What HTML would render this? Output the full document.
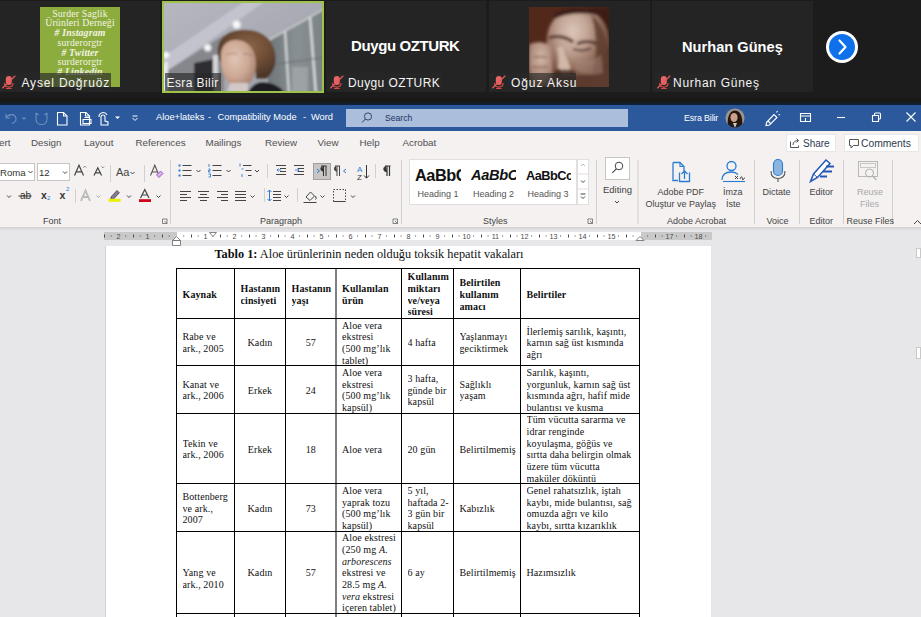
<!DOCTYPE html>
<html><head><meta charset="utf-8">
<style>
*{box-sizing:border-box;margin:0;padding:0}
html,body{width:921px;height:617px;overflow:hidden;background:#e7e7e9;font-family:"Liberation Sans",sans-serif}
.a{position:absolute}
.t{position:absolute;white-space:nowrap}
#zoom{position:absolute;left:0;top:0;width:921px;height:105px;background:#1c1c1c}
.tile{position:absolute;top:1px;height:91px;background:#242424}
.lbl{position:absolute;top:72.8px;height:18.5px;background:rgba(40,40,40,.66);color:#f4f4f4;font-size:12px;line-height:20px;white-space:nowrap}
.mic{position:absolute;top:4px;width:10px;height:12px}
#title{position:absolute;left:0;top:104.5px;width:921px;height:26px;background:#2c599b}
#tabs{position:absolute;left:0;top:130.5px;width:921px;height:25px;background:#f4f1f0}
.tab{position:absolute;top:136.6px;font-size:9.8px;color:#505050;white-space:nowrap}
#ribbon{position:absolute;left:0;top:155px;width:921px;height:73px;background:#f4f1f0}
.glbl{position:absolute;top:216px;font-size:9px;color:#444;white-space:nowrap}
.sep{position:absolute;top:160px;width:1px;height:66px;background:#d2d0ce}
#page{position:absolute;left:106px;top:246px;width:605px;height:371px;background:#fff;box-shadow:-1px 0 0 0 #d2d2d4}
.doc{font-family:"Liberation Serif",serif;color:#111}
.cell{position:absolute;display:flex;align-items:center;font-family:"Liberation Serif",serif;font-size:10px;line-height:11.7px;color:#111;white-space:nowrap;overflow:hidden;letter-spacing:0.1px}
</style></head><body>

<!-- ============ ZOOM STRIP ============ -->
<div id="zoom">
  <div class="a" style="left:0;top:98px;width:921px;height:4px;background:#1a1915"></div>
  <div class="a" style="left:0;top:102px;width:921px;height:3px;background:linear-gradient(#161a20,#0f2240)"></div>
  <!-- tile 1 -->
  <div class="tile" style="left:-2px;width:162px"></div>
  <div class="a" style="left:40px;top:7px;width:80px;height:80px;background:#8dac3e;overflow:hidden">
    <div class="doc" style="position:absolute;left:0;top:1.6px;width:80px;text-align:center;color:#f2f4e4;font-size:9.8px;line-height:9.75px;letter-spacing:0.15px">
      Surder Saglik<br>Ürünleri Derneği<br><b><i># Instagram</i></b><br>surderorgtr<br><b><i># Twitter</i></b><br>surderorgtr<br><b><i># Linkedin</i></b>
    </div>
  </div>
  <div class="lbl" style="left:-1px;width:112px">
    <svg class="a" style="left:0;top:0" width="20" height="20" viewBox="0 0 20 20"><rect x="6.8" y="3" width="6" height="9" rx="3" fill="#e86464"/><path d="M5.5 10 q0 4 4.3 4 q4.3 0 4.3 -4 M9.8 14 v1.5 M7 15.5 h5.6" fill="none" stroke="#d84848" stroke-width="1.2"/><path d="M3.3 15.3 L16.3 2.7" stroke="#e25a5a" stroke-width="1.2"/></svg>
    <span class="t" style="left:22.5px;top:0;letter-spacing:0.82px">Aysel Doğruöz</span>
  </div>

  <!-- tile 2 (video) -->
  <div class="a" style="left:162px;top:1px;width:162px;height:92px;background:#9fc24a"></div>
  <svg class="a" style="left:164px;top:3px" width="158" height="88" viewBox="0 0 158 88">
    <defs>
      <filter id="vb" x="-5%" y="-5%" width="110%" height="110%"><feGaussianBlur stdDeviation="1.1"/></filter>
      <radialGradient id="lt" cx="50%" cy="50%" r="50%"><stop offset="0" stop-color="#fff"/><stop offset=".45" stop-color="#fff" stop-opacity=".9"/><stop offset="1" stop-color="#fff" stop-opacity="0"/></radialGradient>
      <linearGradient id="cl" x1="0" y1="0" x2="1" y2="1"><stop offset="0" stop-color="#b7b8c2"/><stop offset="1" stop-color="#9c9ea6"/></linearGradient>
      <linearGradient id="wn" x1="0" y1="0" x2="1" y2="0"><stop offset="0" stop-color="#6f7679"/><stop offset=".5" stop-color="#899093"/><stop offset="1" stop-color="#7a8184"/></linearGradient>
      <radialGradient id="hr" cx="55%" cy="35%" r="60%"><stop offset="0" stop-color="#8a6448"/><stop offset=".6" stop-color="#6c4b34"/><stop offset="1" stop-color="#4e3828"/></radialGradient>
      <radialGradient id="fc" cx="40%" cy="40%" r="65%"><stop offset="0" stop-color="#e0c4b6"/><stop offset=".6" stop-color="#cda894"/><stop offset="1" stop-color="#a88272"/></radialGradient>
    </defs>
    <g filter="url(#vb)">
    <rect x="-4" y="-4" width="166" height="96" fill="url(#cl)"/>
    <path d="M-4 56 L84 -4 L104 -4 L6 66 L-4 72 Z" fill="#c2c3cc"/>
    <path d="M-4 72 L6 66 L60 32 L60 92 L-4 92 Z" fill="#85878c"/>
    <path d="M-4 62 L4 58 L4 92 L-4 92 Z" fill="#e8e8ec"/>
    <path d="M30 60 L50 56 L50 92 L30 92 Z" fill="#2e2e30"/>
    <rect x="49" y="52" width="5" height="26" fill="#d4d4d8"/>
    <path d="M104 38 L162 4 L162 92 L104 92 Z" fill="url(#wn)"/>
    <path d="M105 37 L162 5" stroke="#c6cacb" stroke-width="1.8"/>
    <path d="M121 28 L125 92" stroke="#cdd1d2" stroke-width="2.4"/>
    <path d="M146 14 L152 92" stroke="#d6dadb" stroke-width="2.4"/>
    <path d="M106 62 L162 54" stroke="#666d71" stroke-width="1.2"/>
    <rect x="128" y="64" width="16" height="26" fill="#a9b0b2" opacity=".6"/>
    <circle cx="72.7" cy="21.7" r="5.5" fill="url(#lt)"/>
    <circle cx="43.7" cy="44.8" r="5" fill="url(#lt)"/>
    <circle cx="2" cy="52" r="4.5" fill="url(#lt)"/>
    <path d="M55 56 C50 40 60 28 76 27 C92 25 106 32 110 46 C114 58 110 70 102 76 L92 76 C92 58 84 44 72 44 C62 44 58 52 58 62 Z" fill="url(#hr)"/>
    <path d="M57 54 C56 44 62 37 72 37 C85 37 92 48 92 60 C92 76 85 84 75 84 C63 84 58 72 57 60 Z" fill="url(#fc)"/>
    <path d="M62 52 C66 50 70 50 73 51 M79 51 C83 50 86 51 88 53" stroke="#8a6a5e" stroke-width="1.1" fill="none" opacity=".6"/>
    <path d="M66 80 L84 80 L84 92 L62 92 Z" fill="#d2c8c6"/>
    <path d="M82 92 C86 84 92 79 98 79 C108 79 118 84 122 92 Z" fill="#1e1e22"/>
    </g>
  </svg>
  <div class="lbl" style="left:164.5px;width:56.5px">
    <span class="t" style="left:2px;top:0;letter-spacing:0.42px">Esra Bilir</span>
  </div>

  <!-- tile 3 -->
  <div class="tile" style="left:326px;width:160px"></div>
  <div class="t" style="left:351px;top:37.3px;font-size:15px;font-weight:bold;color:#fff;letter-spacing:-0.4px">Duygu OZTURK</div>
  <div class="lbl" style="left:327px;width:114.5px">
    <svg class="a" style="left:0;top:0" width="20" height="20" viewBox="0 0 20 20"><rect x="6.8" y="3" width="6" height="9" rx="3" fill="#e86464"/><path d="M5.5 10 q0 4 4.3 4 q4.3 0 4.3 -4 M9.8 14 v1.5 M7 15.5 h5.6" fill="none" stroke="#d84848" stroke-width="1.2"/><path d="M3.3 15.3 L16.3 2.7" stroke="#e25a5a" stroke-width="1.2"/></svg>
    <span class="t" style="left:21px;top:0;letter-spacing:0.4px">Duygu OZTURK</span>
  </div>

  <!-- tile 4 -->
  <div class="tile" style="left:489px;width:161px"></div>
  <svg class="a" style="left:529px;top:7px" width="80" height="80" viewBox="0 0 80 80">
    <defs>
      <filter id="bl" x="-10%" y="-10%" width="120%" height="120%"><feGaussianBlur stdDeviation="1.6"/></filter>
      <radialGradient id="hd" cx="42%" cy="28%" r="72%"><stop offset="0" stop-color="#dcc6b8"/><stop offset=".35" stop-color="#c0a292"/><stop offset=".7" stop-color="#86604e"/><stop offset="1" stop-color="#52301f"/></radialGradient>
      <radialGradient id="hn" cx="50%" cy="35%" r="70%"><stop offset="0" stop-color="#d4b8a8"/><stop offset=".7" stop-color="#a88676"/><stop offset="1" stop-color="#6e4a3a"/></radialGradient>
    </defs>
    <rect width="80" height="80" fill="#52281b"/>
    <g filter="url(#bl)">
      <rect x="60" y="0" width="22" height="80" fill="#3e1d13"/>
      <path d="M18 40 C16 18 28 2 48 2 C68 2 80 16 80 36 L80 82 L26 82 C22 70 19 55 18 40 Z" fill="url(#hd)"/>
      <path d="M24 8 C34 0 60 -2 74 10 C66 6 40 4 26 12 Z" fill="#3a1f16"/>
      <path d="M20 31 C28 28 38 30 44 35 M48 37 C54 34 62 34 68 37" stroke="#4a2a20" stroke-width="3" fill="none"/>
      <path d="M44 42 C50 44 56 44 62 41" stroke="#55352a" stroke-width="2.2" fill="none"/>
      <path d="M28 40 C30 50 30 58 28 63 C32 66 38 66 42 63 C40 56 36 48 34 40 Z" fill="#d2b8a8"/>
      <path d="M28 62 C31 65 38 66 42 63" stroke="#5a3628" stroke-width="2.5" fill="none"/>
      <path d="M24 66 C34 70 60 70 80 62 L80 82 L28 82 Z" fill="#5a3a2e"/><path d="M26 66 C32 64 40 64 46 66" stroke="#3e2218" stroke-width="3" fill="none"/>
      <path d="M0 38 C4 34 18 34 22 40 L24 80 L0 80 Z" fill="url(#hn)"/>
      <path d="M62 8 C76 18 82 40 82 82 L58 82 C68 60 70 30 62 8 Z" fill="#5e3c2e" opacity=".85"/>
      <path d="M46 50 C54 56 64 54 72 48 L74 66 C60 70 50 66 46 62 Z" fill="#a8887a" opacity=".5"/>
      <path d="M4 50 h14 M3 60 h16" stroke="#8a6656" stroke-width="1.5"/>
    </g>
  </svg>
  <div class="lbl" style="left:489.3px;width:87px">
    <svg class="a" style="left:0;top:0" width="20" height="20" viewBox="0 0 20 20"><rect x="6.8" y="3" width="6" height="9" rx="3" fill="#e86464"/><path d="M5.5 10 q0 4 4.3 4 q4.3 0 4.3 -4 M9.8 14 v1.5 M7 15.5 h5.6" fill="none" stroke="#d84848" stroke-width="1.2"/><path d="M3.3 15.3 L16.3 2.7" stroke="#e25a5a" stroke-width="1.2"/></svg>
    <span class="t" style="left:21.6px;top:0;letter-spacing:0.95px">Oğuz Aksu</span>
  </div>

  <!-- tile 5 -->
  <div class="tile" style="left:652px;width:161px"></div>
  <div class="t" style="left:682px;top:39px;font-size:14.6px;font-weight:bold;color:#fff;letter-spacing:0.02px">Nurhan Güneş</div>
  <div class="lbl" style="left:653.5px;width:107.5px">
    <svg class="a" style="left:0;top:0" width="20" height="20" viewBox="0 0 20 20"><rect x="6.8" y="3" width="6" height="9" rx="3" fill="#e86464"/><path d="M5.5 10 q0 4 4.3 4 q4.3 0 4.3 -4 M9.8 14 v1.5 M7 15.5 h5.6" fill="none" stroke="#d84848" stroke-width="1.2"/><path d="M3.3 15.3 L16.3 2.7" stroke="#e25a5a" stroke-width="1.2"/></svg>
    <span class="t" style="left:19.5px;top:0;letter-spacing:0.72px">Nurhan Güneş</span>
  </div>

  <!-- next arrow -->
  <div class="a" style="left:826px;top:31px;width:32px;height:32px;border-radius:50%;background:#fff"></div>
  <div class="a" style="left:829px;top:34px;width:26px;height:26px;border-radius:50%;background:#0e71eb"></div>
  <svg class="a" style="left:826px;top:31px" width="32" height="32" viewBox="0 0 32 32"><path d="M13.5 9.5 L19.5 16 L13.5 22.5" stroke="#fff" stroke-width="2.2" fill="none" stroke-linecap="round" stroke-linejoin="round"/></svg>
</div>

<!-- ============ WORD TITLE BAR ============ -->
<div id="title"></div>
<!-- QAT icons -->
<svg class="a" style="left:0;top:105px" width="150" height="25" viewBox="0 0 150 25">
  <g fill="none" stroke="#6f8fc2" stroke-width="1.1">
    <path d="M6 9 L6 13 L10 13"/><path d="M6.5 12.5 C9 8.5 15 8.5 16 13.5 C16.5 16 14 18 12 18.5"/>
    <path d="M22.5 12.5 l1.5 1.5 l1.5 -1.5" />
    <path d="M36 8 v6 c0 3.5 2.5 5.5 5.5 5.5 s5.5 -2 5.5 -5.5 v-6"/><path d="M36 8 l2.5 2 M47 8 l-2.5 2"/>
  </g>
  <g fill="none" stroke="#fff" stroke-width="1.1">
    <path d="M57.5 7.5 h6 l3.5 3.5 v9 h-9.5 z"/><path d="M63.5 7.5 v3.5 h3.5"/>
    <path d="M80.5 7.5 h5.5 l3.5 3.5 v9 h-9 z"/><path d="M85.5 7.5 v3.5 h3.5"/><path d="M83 14.5 h8 v4 h-8 z M84.5 12.5 h5 v2"/>
    <path d="M101 20 v-8 a2 2 0 0 1 4 0 v4 l3 1 v3 z"/><path d="M99 12 a4.2 4.2 0 0 1 8 -2"/>
  </g>
  <path d="M115 11.5 l2.5 2.5 l2.5 -2.5 z" fill="#fff"/>
  <path d="M132.5 11 h5 M132.5 13 l2.5 2.5 l2.5 -2.5" stroke="#fff" stroke-width="1" fill="none"/>
</svg>
<div class="t" style="left:156px;top:112px;font-size:9.3px;color:#fff">Aloe+lateks</div>
<div class="t" style="left:208px;top:112px;font-size:9.3px;color:#fff">-</div>
<div class="t" style="left:217.5px;top:112px;font-size:9.3px;color:#fff">Compatibility Mode</div>
<div class="t" style="left:303px;top:112px;font-size:9.3px;color:#fff">-</div>
<div class="t" style="left:311px;top:112px;font-size:9.3px;color:#fff">Word</div>
<div class="a" style="left:346px;top:109px;width:282px;height:18px;background:#abbfdc"></div>
<svg class="a" style="left:360px;top:111px" width="14" height="13" viewBox="0 0 14 13"><circle cx="8" cy="5.5" r="3.6" fill="none" stroke="#2a3a5a" stroke-width=".9"/><path d="M5.4 8.1 L2 11.5" stroke="#2a3a5a" stroke-width="1"/></svg>
<div class="t" style="left:385px;top:112.5px;font-size:8.6px;color:#1e3260">Search</div>
<div class="t" style="left:684px;top:112.5px;font-size:8.8px;color:#fff;letter-spacing:-0.1px">Esra Bilir</div>
<svg class="a" style="left:725px;top:108px" width="20" height="20" viewBox="0 0 20 20"><defs><clipPath id="av"><circle cx="10" cy="10" r="9.6"/></clipPath></defs><g clip-path="url(#av)"><rect width="20" height="20" fill="#9d948f"/><path d="M3 20 C2 12 3 3 10 2.5 C17 3 18 12 17 20 Z" fill="#24160f"/><ellipse cx="9" cy="9.5" rx="3.6" ry="4.6" fill="#caa08a"/><path d="M4 20 C5 15 8 14.5 10 15 C13 14.5 15 16 16 20 Z" fill="#1c1c22"/><path d="M8 15 L10 20 L12 15 Z" fill="#d8c8c0"/></g></svg>
<svg class="a" style="left:760px;top:107px" width="160" height="20" viewBox="0 0 160 20">
  <g fill="none" stroke="#fff" stroke-width="1.1">
    <path d="M6.5 15.5 L14 7.5 L17 10.5 L9.5 18 L6 18.5 z M8 14 l3 3"/><path d="M16.5 5.5 l1 -1.5 M18.5 8 l1.5 -0.5"/>
    <path d="M40.5 6.5 h10 v8 h-10 z M40.5 9 h10 M45.5 11 v3.5"/>
    <path d="M77 10.5 h8"/>
    <path d="M112.5 8.5 h6 v6 h-6 z M114.5 8.5 v-1.5 q0 -1 1 -1 h4 q1 0 1 1 v4 q0 1 -1 1 h-1"/>
    <path d="M146.5 5.5 L155.5 14.5 M155.5 5.5 L146.5 14.5" stroke-width="1.1"/>
  </g>
</svg>

<!-- ============ TABS ============ -->
<div id="tabs"></div>
<div class="tab" style="left:-1px">ert</div>
<div class="tab" style="left:31px">Design</div>
<div class="tab" style="left:84px">Layout</div>
<div class="tab" style="left:135.5px">References</div>
<div class="tab" style="left:205.5px">Mailings</div>
<div class="tab" style="left:265px">Review</div>
<div class="tab" style="left:317.5px">View</div>
<div class="tab" style="left:359.5px">Help</div>
<div class="tab" style="left:402.5px">Acrobat</div>
<div class="a" style="left:786px;top:134px;width:50px;height:18px;background:#fff;border:1px solid #e9e7e5"></div>
<svg class="a" style="left:789px;top:137px" width="12" height="12" viewBox="0 0 12 12"><path d="M1.5 4.5 v6 h8 v-2" fill="none" stroke="#555" stroke-width="1"/><path d="M4 8 c0 -3 2 -4.5 5.5 -4.5 M7.5 1.5 l2 2 l-2 2" fill="none" stroke="#555" stroke-width="1"/></svg>
<div class="t" style="left:803px;top:137.6px;font-size:10px;color:#2e3a4e">Share</div>
<div class="a" style="left:844px;top:134px;width:75px;height:18px;background:#fff;border:1px solid #e9e7e5"></div>
<svg class="a" style="left:848px;top:138px" width="12" height="12" viewBox="0 0 12 12"><path d="M1.5 1.5 h9 v6 h-5 l-2.5 2.5 v-2.5 h-1.5 z" fill="none" stroke="#555" stroke-width="1"/></svg>
<div class="t" style="left:861px;top:137.6px;font-size:10.3px;color:#2e3a4e">Comments</div>

<!-- ============ RIBBON ============ -->
<div id="ribbon"></div>
<svg class="a" style="left:0;top:155px" width="921" height="73" viewBox="0 155 921 73">
 <g fill="none" stroke-width="1">
  <!-- Font boxes -->
  <rect x="-2" y="163.5" width="36.5" height="17" fill="#fff" stroke="#c8c6c4"/>
  <rect x="37.5" y="163.5" width="32" height="17" fill="#fff" stroke="#c8c6c4"/>
  <path d="M28.5 171 l2 2 l2 -2 M63 171.5 l2 2 l2 -2" stroke="#444"/>
  <!-- grow/shrink -->
  <path d="M74.5 175.5 L79 165.2 L83.5 175.5 M76.2 171.8 h5.6" stroke="#444" stroke-width="1.2"/><path d="M83.5 167.5 l1.3 -1.3 l1.3 1.3" stroke="#555" stroke-width=".8"/>
  <path d="M94 175.5 L97.8 167.8 L101.6 175.5 M95.4 172.8 h4.8" stroke="#444" stroke-width="1.2"/><path d="M101.5 166.5 l1.3 1.3 l1.3 -1.3" stroke="#555" stroke-width=".8"/>
  <path d="M110.5 165 v17" stroke="#d2d0ce"/>
  <path d="M130.5 172 l2 2 l2 -2" stroke="#444"/>
  <path d="M144.5 165 v17" stroke="#d2d0ce"/>
  <path d="M150.5 175.5 L154.8 165.2 L159 175.5 M152 172 h5.5" stroke="#555" stroke-width="1.1"/><path d="M156.5 175 l4 -4 l2.5 2.5 l-4 4 z" stroke="#a060c8" fill="#d8b0e8"/>
  <!-- row2 -->
  <path d="M7 195.5 l2 2 l2 -2" stroke="#444"/>
  <path d="M18.5 196 h13" stroke="#333"/>
  <path d="M96.5 195.5 l2 2 l2 -2" stroke="#aaa"/>
  <path d="M75.5 189 v14" stroke="#d2d0ce"/>
  <path d="M81 200.8 L85.5 190.5 L90 200.8 M82.8 197 h5.4" stroke="#a8a8a8" stroke-width="1.7"/><path d="M81 200.8 L85.5 190.5 L90 200.8" stroke="#e8e8e8" stroke-width=".5"/>
  <path d="M111 197 l6 -6.5 l2.3 2.3 l-6 6.5 h-2.3 z" stroke="#555" fill="#8a7a9a"/><rect x="108.5" y="198.8" width="12" height="3" fill="#e8f000" stroke="none"/>
  <path d="M127 195.5 l2 2 l2 -2" stroke="#444"/>
  <path d="M140.5 198 L144.8 189.5 L149 198 M142 195 h5.6" stroke="#444" stroke-width="1.2"/><rect x="139" y="199.2" width="12" height="2.8" fill="#d0021b" stroke="none"/>
  <path d="M156.5 195.5 l2 2 l2 -2" stroke="#444"/>
  <path d="M162.5 219 h4.5 v4.5 M162.5 219 v4.5 h4.5 M164.5 221 l2.5 2.5" stroke="#666" stroke-width=".8"/>
  <path d="M170.5 160 v64" stroke="#d2d0ce"/>

  <!-- Paragraph row 1 -->
  <g stroke="#444">
   <path d="M182.5 165.5 h9 M182.5 170.5 h9 M182.5 175.5 h9"/>
   <path d="M212.5 165.5 h9 M212.5 170.5 h9 M212.5 175.5 h9"/>
   <path d="M243 165.5 h8.5 M245.5 170.5 h6 M248 175.5 h3.5"/>
   <path d="M196.5 170 l2 2 l2 -2 M226.5 170 l2 2 l2 -2 M255 170 l2 2 l2 -2"/>
   <path d="M276 165.5 h10 M280 168.5 h6 M280 171.5 h6 M276 174.5 h10"/>
   <path d="M294 165.5 h10 M298 168.5 h6 M298 171.5 h6 M294 174.5 h10"/>
  </g>
  <g fill="#2b7cd3" stroke="none">
   <rect x="178.5" y="164.5" width="2" height="2"/><rect x="178.5" y="169.5" width="2" height="2"/><rect x="178.5" y="174.5" width="2" height="2"/>
  </g>
  <g stroke="#2b7cd3" stroke-width=".9">
   <path d="M209 164 v3 M208.5 169 h1.5 v1.5 h-1.5 v1.5 h2 M208.5 174 h2 v3 h-2"/>
   <path d="M240 163.5 v3 M241.5 169 h2 M242 174 v3"/>
   <path d="M281 170 h-4 l1.5 -1.5 M277 170 l1.5 1.5"/>
   <path d="M295 170 h4 l-1.5 -1.5 M299 170 l-1.5 1.5"/>
  </g>
  <path d="M267.5 164 v14" stroke="#d2d0ce"/>
  <rect x="313.5" y="163.5" width="17" height="16" fill="#c8c6c4" stroke="#a19f9d"/>
  <path d="M317 169 l2.5 2 l-2.5 2" stroke="#2b7cd3"/><path d="M323.5 166 v10 M326 166 v10 M321 166 h5.5" stroke="#333"/><path d="M322.5 166.5 a2 2.3 0 0 0 0 4.5 h1" fill="#333" stroke="#333"/>
  <path d="M337 166 v10 M339.5 166 v10 M335 166 h5" stroke="#444"/><path d="M336 166.5 a2 2.3 0 0 0 0 4.5 h1" fill="#444" stroke="#444"/><path d="M346 169 l-2.5 2 l2.5 2" stroke="#2b7cd3"/>
  <text x="357" y="172" font-family="Liberation Sans" font-size="8" fill="#2b7cd3" stroke="none">A</text>
  <text x="357" y="179.5" font-family="Liberation Sans" font-size="8" fill="#333" stroke="none">Z</text>
  <path d="M366.5 165 v13 M364 175.5 l2.5 2.7 l2.5 -2.7" stroke="#333"/>
  <path d="M375.5 164 v14" stroke="#d2d0ce"/>
  <path d="M387 166 v10 M389.5 166 v10 M385 166 h5.5" stroke="#333" stroke-width="1.2"/><path d="M386 166.5 a2.2 2.5 0 0 0 0 5 h1" fill="#333" stroke="#333"/>
  <!-- Paragraph row 2 -->
  <g stroke="#444">
   <path d="M180 191.5 h11 M180 194.5 h7 M180 197.5 h11 M180 200.5 h7"/>
   <path d="M198 191.5 h11 M200 194.5 h7 M198 197.5 h11 M200 200.5 h7"/>
   <path d="M217 191.5 h11 M221 194.5 h7 M217 197.5 h11 M221 200.5 h7"/>
   <path d="M235 191.5 h11 M235 194.5 h11 M235 197.5 h11 M235 200.5 h11"/>
   <path d="M250.5 195.5 l2 2 l2 -2"/>
   <path d="M273 191.5 h8 M273 194.5 h8 M273 197.5 h8 M273 200.5 h8"/>
   <path d="M284.5 195.5 l2 2 l2 -2"/>
   <path d="M320.5 195.5 l2 2 l2 -2"/>
   <path d="M351 195.5 l2 2 l2 -2"/>
  </g>
  <path d="M269.5 190 v11 M267.5 192 l2 -2 l2 2 M267.5 199 l2 2 l2 -2" stroke="#2b7cd3"/>
  <path d="M264.5 188 v14 M297.5 188 v14" stroke="#d2d0ce"/>
  <path d="M306 197 l4.5 -5 l4 4 l-4.5 4.5 z" stroke="#444"/><path d="M303.5 202.5 h13" stroke="#444"/><path d="M315.5 196 q1.5 2.5 0 3.5" stroke="#444"/>
  <rect x="333.5" y="189.5" width="12" height="12" stroke="#444" stroke-dasharray="1.5 1.5"/><path d="M333.5 201.5 h12" stroke="#444"/>
  <path d="M393 219 h4.5 v4.5 M393 219 v4.5 h4.5 M395 221 l2.5 2.5" stroke="#666" stroke-width=".8"/>
  <path d="M401.5 160 v64" stroke="#d2d0ce"/>

  <!-- Styles gallery -->
  <rect x="409.5" y="159.5" width="167" height="45" fill="#fff" stroke="#e1dfdd"/>
  <rect x="577.5" y="159.5" width="11" height="45" fill="#fff" stroke="#e1dfdd"/>
  <path d="M577.5 174 h11 M577.5 189 h11" stroke="#e1dfdd"/>
  <path d="M581 166 l2 -2 l2 2" stroke="#bbb"/>
  <path d="M581 180.5 l2 2 l2 -2" stroke="#444"/>
  <path d="M580.5 194 h5 M581 196.5 l2 2 l2 -2" stroke="#444"/>
  <path d="M588 219 h4.5 v4.5 M588 219 v4.5 h4.5 M590 221 l2.5 2.5" stroke="#666" stroke-width=".8"/>
  <path d="M596.5 160 v64" stroke="#d2d0ce"/>
  <!-- Editing -->
  <rect x="605.5" y="157.5" width="24" height="22" fill="#fff" stroke="#c8c6c4"/>
  <circle cx="619" cy="166" r="3.8" stroke="#444"/><path d="M616.3 168.8 l-4 4" stroke="#444" stroke-width="1.1"/>
  <path d="M615 201 l2 2 l2 -2" stroke="#444"/>
  <path d="M638 160 v64" stroke="#d2d0ce"/>
  <!-- Adobe PDF -->
  <path d="M673 162.5 h7 l4 4 v5 M673 162.5 v18 h5" stroke="#2b7cd3" stroke-width="1.3"/>
  <path d="M680 162.5 v4 h4" stroke="#2b7cd3" stroke-width="1.1"/>
  <path d="M679.5 172.5 v9 h10 v-9" stroke="#2b7cd3" stroke-width="1.3"/>
  <path d="M684.5 179 v-8 M681.5 174 l3 -3 l3 3" stroke="#2b7cd3" stroke-width="1.3"/>
  <!-- Imza -->
  <circle cx="731.5" cy="166" r="4.5" stroke="#2b7cd3" stroke-width="1.3"/>
  <path d="M722 180 c0 -5 3 -8 9.5 -8 c3 0 5 1 6.5 2.5" stroke="#2b7cd3" stroke-width="1.3"/>
  <path d="M723 181.5 h22" stroke="#2b7cd3" stroke-width="1.1"/>
  <path d="M735 176 l3 3 M738 176 l-3 3" stroke="#333" stroke-width=".9"/>
  <path d="M740 179 c1 -3 2 -3 2.5 0 s1.5 -2 2.5 -1" stroke="#333" stroke-width=".9"/>
  <path d="M754.5 160 v64" stroke="#d2d0ce"/>
  <!-- Dictate mic -->
  <rect x="773.5" y="159.5" width="9" height="16" rx="4.5" fill="#8cb4e0" stroke="#2b7cd3" stroke-width="1.1"/>
  <path d="M771 171 c0 6 3 7.5 7 7.5 s7 -1.5 7 -7.5 M778 178.5 v3.5" stroke="#555" stroke-width="1.1"/>
  <path d="M799.5 160 v64" stroke="#d2d0ce"/>
  <!-- Editor -->
  <path d="M810.5 181.5 l3 -7.5 l12.5 -14 l4 3.5 l-12.5 14 z" fill="#fff" stroke="#2457b8" stroke-width="1.5"/>
  <path d="M813.5 174 l4 3.5" stroke="#2457b8" stroke-width="1"/>
  <path d="M826 166.5 h8 M823 171.5 h9 M820 176.5 h7" stroke="#2457b8" stroke-width="2"/>
  <path d="M843.5 160 v64" stroke="#d2d0ce"/>
  <!-- Reuse files -->
  <rect x="858.5" y="161.5" width="19" height="15" stroke="#b8b8b8"/>
  <rect x="860.5" y="163.5" width="15" height="4" stroke="#c8c8c8"/>
  <circle cx="869.5" cy="173" r="4" stroke="#b0b0b0"/><path d="M872.5 176 l4 4" stroke="#b0b0b0" stroke-width="1.2"/>
  <path d="M892.5 160 v64" stroke="#d2d0ce"/>
  <path d="M914 224 l3.5 -3.5 l3.5 3.5" stroke="#444"/>
 </g>
</svg>
<div class="t" style="left:0;top:167px;font-size:9.6px;color:#333">Roma</div>
<div class="t" style="left:39px;top:167px;font-size:9.6px;color:#333">12</div>
<div class="t" style="left:116px;top:166px;font-size:11px;color:#444">Aa</div>
<div class="t" style="left:20px;top:189.5px;font-size:10px;color:#333">ab</div>
<div class="t" style="left:41px;top:189px;font-size:10.5px;font-weight:bold;color:#333">x</div>
<div class="t" style="left:47px;top:195px;font-size:6px;color:#2b7cd3">2</div>
<div class="t" style="left:59.5px;top:189px;font-size:10.5px;font-weight:bold;color:#333">x</div>
<div class="t" style="left:66px;top:186px;font-size:6px;color:#2b7cd3">2</div>
<div class="glbl" style="left:43px">Font</div>
<div class="glbl" style="left:260px">Paragraph</div>
<div class="t" style="left:415px;top:165.5px;font-size:16.3px;font-weight:bold;color:#111;letter-spacing:-0.45px;width:45.5px;overflow:hidden">AaBbC</div>
<div class="t" style="left:471px;top:167px;font-size:14.6px;font-weight:bold;font-style:italic;color:#111;letter-spacing:-0.35px;width:45px;overflow:hidden">AaBbC</div>
<div class="t" style="left:526px;top:168px;font-size:12.8px;font-weight:bold;color:#111;letter-spacing:-0.55px;width:45px;overflow:hidden">AaBbCc</div>
<div class="t" style="left:417.5px;top:189px;font-size:9px;color:#555">Heading 1</div>
<div class="t" style="left:473px;top:189px;font-size:9px;color:#555">Heading 2</div>
<div class="t" style="left:527.5px;top:189px;font-size:9px;color:#555">Heading 3</div>
<div class="glbl" style="left:483px">Styles</div>
<div class="t" style="left:603px;top:184px;font-size:9.5px;color:#444">Editing</div>
<div class="t" style="left:657.5px;top:186.5px;font-size:9px;color:#444">Adobe PDF</div>
<div class="t" style="left:645.5px;top:199px;font-size:9px;color:#444">Oluştur ve Paylaş</div>
<div class="t" style="left:723px;top:186.5px;font-size:9px;color:#444">İmza</div>
<div class="t" style="left:726px;top:199px;font-size:9px;color:#444">İste</div>
<div class="glbl" style="left:667px">Adobe Acrobat</div>
<div class="t" style="left:762.5px;top:186.5px;font-size:9px;color:#444">Dictate</div>
<div class="glbl" style="left:766.5px">Voice</div>
<div class="t" style="left:809.5px;top:186.5px;font-size:9px;color:#444">Editor</div>
<div class="glbl" style="left:809.5px">Editor</div>
<div class="t" style="left:857px;top:186.5px;font-size:9px;color:#aaa">Reuse</div>
<div class="t" style="left:860px;top:199px;font-size:9px;color:#aaa">Files</div>
<div class="glbl" style="left:846.5px">Reuse Files</div>
<div class="a" style="left:0;top:227px;width:921px;height:4px;background:linear-gradient(#d2d2d2,#e7e7e9)"></div>

<!-- ============ DOCUMENT ============ -->
<div id="page"></div>
<div class="a" style="left:104px;top:232px;width:608px;height:8px;background:#c9c9c9"></div>
<div class="a" style="left:176.5px;top:232px;width:464px;height:8px;background:#fff"></div>
<svg class="a" style="left:0;top:229px" width="921" height="18" viewBox="0 229 921 18"><g fill="#4a4a4a" stroke="none" font-family="Liberation Sans" font-size="7.2"><rect x="104.0" y="234.5" width="1" height="3"/><rect x="110.7" y="235.5" width="1" height="1"/><text x="118.4" y="238.6" text-anchor="middle">2</text><rect x="125.2" y="235.5" width="1" height="1"/><rect x="133.0" y="234.5" width="1" height="3"/><rect x="139.7" y="235.5" width="1" height="1"/><text x="147.4" y="238.6" text-anchor="middle">1</text><rect x="154.2" y="235.5" width="1" height="1"/><rect x="162.0" y="234.5" width="1" height="3"/><rect x="168.7" y="235.5" width="1" height="1"/><rect x="183.2" y="235.5" width="1" height="1"/><rect x="191.0" y="234.5" width="1" height="3"/><rect x="197.7" y="235.5" width="1" height="1"/><text x="205.4" y="238.6" text-anchor="middle">1</text><rect x="212.2" y="235.5" width="1" height="1"/><rect x="220.0" y="234.5" width="1" height="3"/><rect x="226.7" y="235.5" width="1" height="1"/><text x="234.4" y="238.6" text-anchor="middle">2</text><rect x="241.2" y="235.5" width="1" height="1"/><rect x="249.0" y="234.5" width="1" height="3"/><rect x="255.6" y="235.5" width="1" height="1"/><text x="263.4" y="238.6" text-anchor="middle">3</text><rect x="270.1" y="235.5" width="1" height="1"/><rect x="278.0" y="234.5" width="1" height="3"/><rect x="284.6" y="235.5" width="1" height="1"/><text x="292.4" y="238.6" text-anchor="middle">4</text><rect x="299.1" y="235.5" width="1" height="1"/><rect x="307.0" y="234.5" width="1" height="3"/><rect x="313.6" y="235.5" width="1" height="1"/><text x="321.4" y="238.6" text-anchor="middle">5</text><rect x="328.1" y="235.5" width="1" height="1"/><rect x="336.0" y="234.5" width="1" height="3"/><rect x="342.6" y="235.5" width="1" height="1"/><text x="350.4" y="238.6" text-anchor="middle">6</text><rect x="357.1" y="235.5" width="1" height="1"/><rect x="365.0" y="234.5" width="1" height="3"/><rect x="371.6" y="235.5" width="1" height="1"/><text x="379.4" y="238.6" text-anchor="middle">7</text><rect x="386.1" y="235.5" width="1" height="1"/><rect x="394.0" y="234.5" width="1" height="3"/><rect x="400.6" y="235.5" width="1" height="1"/><text x="408.4" y="238.6" text-anchor="middle">8</text><rect x="415.1" y="235.5" width="1" height="1"/><rect x="423.0" y="234.5" width="1" height="3"/><rect x="429.6" y="235.5" width="1" height="1"/><text x="437.4" y="238.6" text-anchor="middle">9</text><rect x="444.1" y="235.5" width="1" height="1"/><rect x="452.0" y="234.5" width="1" height="3"/><rect x="458.6" y="235.5" width="1" height="1"/><text x="466.4" y="238.6" text-anchor="middle">10</text><rect x="473.1" y="235.5" width="1" height="1"/><rect x="481.0" y="234.5" width="1" height="3"/><rect x="487.6" y="235.5" width="1" height="1"/><text x="495.4" y="238.6" text-anchor="middle">11</text><rect x="502.1" y="235.5" width="1" height="1"/><rect x="510.0" y="234.5" width="1" height="3"/><rect x="516.6" y="235.5" width="1" height="1"/><text x="524.4" y="238.6" text-anchor="middle">12</text><rect x="531.1" y="235.5" width="1" height="1"/><rect x="539.0" y="234.5" width="1" height="3"/><rect x="545.6" y="235.5" width="1" height="1"/><text x="553.4" y="238.6" text-anchor="middle">13</text><rect x="560.1" y="235.5" width="1" height="1"/><rect x="568.0" y="234.5" width="1" height="3"/><rect x="574.6" y="235.5" width="1" height="1"/><text x="582.4" y="238.6" text-anchor="middle">14</text><rect x="589.1" y="235.5" width="1" height="1"/><rect x="597.0" y="234.5" width="1" height="3"/><rect x="603.6" y="235.5" width="1" height="1"/><text x="611.4" y="238.6" text-anchor="middle">15</text><rect x="618.1" y="235.5" width="1" height="1"/><rect x="626.0" y="234.5" width="1" height="3"/><rect x="632.6" y="235.5" width="1" height="1"/><rect x="647.1" y="235.5" width="1" height="1"/><rect x="655.0" y="234.5" width="1" height="3"/><rect x="661.6" y="235.5" width="1" height="1"/><text x="669.4" y="238.6" text-anchor="middle">17</text><rect x="676.1" y="235.5" width="1" height="1"/><rect x="684.0" y="234.5" width="1" height="3"/><rect x="690.6" y="235.5" width="1" height="1"/><text x="698.4" y="238.6" text-anchor="middle">18</text><rect x="705.1" y="235.5" width="1" height="1"/></g><path d="M209.5 232.5 h7 l-3.5 4 z" fill="#fff" stroke="#777" stroke-width=".9"/><path d="M172.5 240.5 l4 -4 l4 4 z M172.5 240.5 h8 v5 h-8 z" fill="#fff" stroke="#777" stroke-width=".9"/><path d="M636 240.5 l4 -4 l4 4 z" fill="#fff" stroke="#777" stroke-width=".9"/></svg>
<div class="t doc" style="left:214.5px;top:247px;font-size:12.3px;line-height:14px"><b>Tablo 1:</b> Aloe ürünlerinin neden olduğu toksik hepatit vakaları</div>
<div class="cell" style="left:182.5px;width:52.0px;top:269.7px;height:50.0px"><div><b>Kaynak</b></div></div>
<div class="cell" style="left:240.5px;width:45.0px;top:269.7px;height:50.0px"><div><b>Hastanın<br>cinsiyeti</b></div></div>
<div class="cell" style="left:291.5px;width:44.5px;top:269.7px;height:50.0px"><div><b>Hastanın<br>yaşı</b></div></div>
<div class="cell" style="left:342px;width:59.5px;top:269.7px;height:50.0px"><div><b>Kullanılan<br>ürün</b></div></div>
<div class="cell" style="left:407.5px;width:46.0px;top:269.7px;height:50.0px"><div><b>Kullanım<br>miktarı<br>ve/veya<br>süresi</b></div></div>
<div class="cell" style="left:459.5px;width:61.0px;top:269.7px;height:50.0px"><div><b>Belirtilen<br>kullanım<br>amacı</b></div></div>
<div class="cell" style="left:526.5px;width:112.5px;top:269.7px;height:50.0px"><div><b>Belirtiler</b></div></div>
<div class="cell" style="left:182.5px;width:52.0px;top:319.7px;height:47.0px"><div>Rabe ve<br>ark., 2005</div></div>
<div class="cell" style="left:234.5px;width:51.0px;justify-content:center;text-align:center;top:319.7px;height:47.0px"><div>Kadın</div></div>
<div class="cell" style="left:285.5px;width:50.5px;justify-content:center;text-align:center;top:319.7px;height:47.0px"><div>57</div></div>
<div class="cell" style="left:342px;width:59.5px;top:319.7px;height:47.0px"><div>Aloe vera<br>ekstresi<br>(500 mg’lık<br>tablet)</div></div>
<div class="cell" style="left:407.5px;width:46.0px;top:319.7px;height:47.0px"><div>4 hafta</div></div>
<div class="cell" style="left:459.5px;width:61.0px;top:319.7px;height:47.0px"><div>Yaşlanmayı<br>geciktirmek</div></div>
<div class="cell" style="left:526.5px;width:112.5px;top:319.7px;height:47.0px"><div>İlerlemiş sarılık, kaşıntı,<br>karnın sağ üst kısmında<br>ağrı</div></div>
<div class="cell" style="left:182.5px;width:52.0px;top:366.7px;height:47.5px"><div>Kanat ve<br>ark., 2006</div></div>
<div class="cell" style="left:234.5px;width:51.0px;justify-content:center;text-align:center;top:366.7px;height:47.5px"><div>Erkek</div></div>
<div class="cell" style="left:285.5px;width:50.5px;justify-content:center;text-align:center;top:366.7px;height:47.5px"><div>24</div></div>
<div class="cell" style="left:342px;width:59.5px;top:366.7px;height:47.5px"><div>Aloe vera<br>ekstresi<br>(500 mg’lık<br>kapsül)</div></div>
<div class="cell" style="left:407.5px;width:46.0px;top:366.7px;height:47.5px"><div>3 hafta,<br>günde bir<br>kapsül</div></div>
<div class="cell" style="left:459.5px;width:61.0px;top:366.7px;height:47.5px"><div>Sağlıklı<br>yaşam</div></div>
<div class="cell" style="left:526.5px;width:112.5px;top:366.7px;height:47.5px"><div>Sarılık, kaşıntı,<br>yorgunluk, karnın sağ üst<br>kısmında ağrı, hafif mide<br>bulantısı ve kusma</div></div>
<div class="cell" style="left:182.5px;width:52.0px;top:414.2px;height:70.5px"><div>Tekin ve<br>ark., 2006</div></div>
<div class="cell" style="left:234.5px;width:51.0px;justify-content:center;text-align:center;top:414.2px;height:70.5px"><div>Erkek</div></div>
<div class="cell" style="left:285.5px;width:50.5px;justify-content:center;text-align:center;top:414.2px;height:70.5px"><div>18</div></div>
<div class="cell" style="left:342px;width:59.5px;top:414.2px;height:70.5px"><div>Aloe vera</div></div>
<div class="cell" style="left:407.5px;width:46.0px;top:414.2px;height:70.5px"><div>20 gün</div></div>
<div class="cell" style="left:459.5px;width:61.0px;top:414.2px;height:70.5px"><div>Belirtilmemiş</div></div>
<div class="cell" style="left:526.5px;width:112.5px;top:414.2px;height:70.5px"><div>Tüm vücutta sararma ve<br>idrar renginde<br>koyulaşma, göğüs ve<br>sırtta daha belirgin olmak<br>üzere tüm vücutta<br>maküler döküntü</div></div>
<div class="cell" style="left:182.5px;width:52.0px;top:484.7px;height:47.5px"><div>Bottenberg<br>ve ark.,<br>2007</div></div>
<div class="cell" style="left:234.5px;width:51.0px;justify-content:center;text-align:center;top:484.7px;height:47.5px"><div>Kadın</div></div>
<div class="cell" style="left:285.5px;width:50.5px;justify-content:center;text-align:center;top:484.7px;height:47.5px"><div>73</div></div>
<div class="cell" style="left:342px;width:59.5px;top:484.7px;height:47.5px"><div>Aloe vera<br>yaprak tozu<br>(500 mg’lık<br>kapsül)</div></div>
<div class="cell" style="left:407.5px;width:46.0px;top:484.7px;height:47.5px"><div>5 yıl,<br>haftada 2-<br>3 gün bir<br>kapsül</div></div>
<div class="cell" style="left:459.5px;width:61.0px;top:484.7px;height:47.5px"><div>Kabızlık</div></div>
<div class="cell" style="left:526.5px;width:112.5px;top:484.7px;height:47.5px"><div>Genel rahatsızlık, iştah<br>kaybı, mide bulantısı, sağ<br>omuzda ağrı ve kilo<br>kaybı, sırtta kızarıklık</div></div>
<div class="cell" style="left:182.5px;width:52.0px;top:532.2px;height:82px;padding-top:12px"><div>Yang ve<br>ark., 2010</div></div>
<div class="cell" style="left:234.5px;width:51.0px;justify-content:center;text-align:center;top:532.2px;height:82px"><div>Kadın</div></div>
<div class="cell" style="left:285.5px;width:50.5px;justify-content:center;text-align:center;top:532.2px;height:82px"><div>57</div></div>
<div class="cell" style="left:342px;width:59.5px;top:532.2px;height:82px"><div>Aloe ekstresi<br>(250 mg <i>A.</i><br><i>arborescens</i><br>ekstresi ve<br>28.5 mg <i>A.</i><br><i>vera</i> ekstresi<br>içeren tablet)</div></div>
<div class="cell" style="left:407.5px;width:46.0px;top:532.2px;height:82px"><div>6 ay</div></div>
<div class="cell" style="left:459.5px;width:61.0px;top:532.2px;height:82px"><div>Belirtilmemiş</div></div>
<div class="cell" style="left:526.5px;width:112.5px;top:532.2px;height:82px"><div>Hazımsızlık</div></div>
<svg class="a" style="left:0;top:0" width="921" height="617" viewBox="0 0 921 617"><g stroke="#000" stroke-width="1" fill="none"><path d="M176.5 268.0 V617"/><path d="M234.5 268.0 V617"/><path d="M285.5 268.0 V617"/><path d="M336 268.0 V617"/><path d="M401.5 268.0 V617"/><path d="M453.5 268.0 V617"/><path d="M520.5 268.0 V617"/><path d="M639.5 268.0 V617"/><path d="M176.0 268.5 H640"/><path d="M176.0 318.5 H640"/><path d="M176.0 365.5 H640"/><path d="M176.0 413.5 H640"/><path d="M176.0 483.5 H640"/><path d="M176.0 531.5 H640"/><path d="M176.0 613.5 H640"/></g></svg>
<!-- right scrollbar -->
<div class="a" style="left:916px;top:248px;width:5px;height:10px;background:#fff;border:1px solid #c8c8c8"></div>
<div class="a" style="left:916px;top:347px;width:5px;height:12px;background:#fff;border:1px solid #c8c8c8"></div>


</body></html>
